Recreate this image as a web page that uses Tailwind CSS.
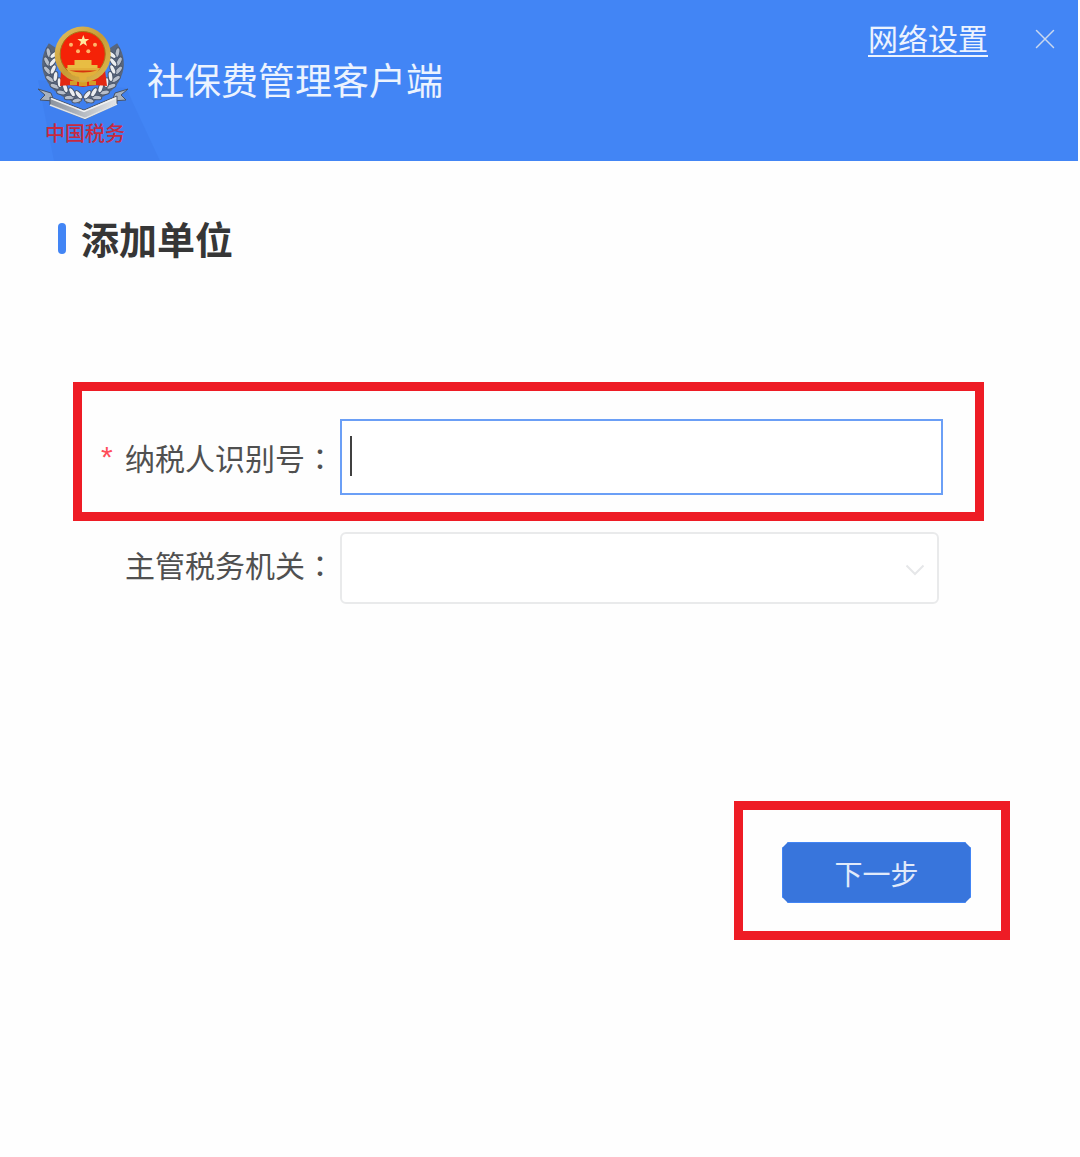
<!DOCTYPE html>
<html lang="zh-CN">
<head>
<meta charset="utf-8">
<meta name="viewport" content="width=device-width, initial-scale=1">
<title>社保费管理客户端</title>
<script src="https://cdn.jsdelivr.net/npm/@tailwindcss/browser@4"></script>
</head>
<body class="min-h-screen bg-[#fefefe] font-['Noto_Sans_CJK_SC',sans-serif] text-[#505050]">
<header class="mr-[2px] flex h-[161px] items-start bg-[#4285f5]">
  <svg class="h-[161px] w-[147px] shrink-0 overflow-visible" viewBox="0 0 147 161" role="img" aria-label="中国税务">
    <defs>
      <linearGradient id="gold" x1="0" y1="0" x2="1" y2="1">
        <stop offset="0" stop-color="#e3c464"/><stop offset=".5" stop-color="#c79a35"/><stop offset="1" stop-color="#e0bd52"/>
      </linearGradient>
      <linearGradient id="silver" x1="0" y1="0" x2="1" y2="0">
        <stop offset="0" stop-color="#8a929d"/><stop offset="1" stop-color="#e3e5e8"/>
      </linearGradient>
      <g id="grain" stroke="#4a566b" stroke-width="1">
        <ellipse cx="-3.500" cy="0" rx="2.300" ry="5" transform="rotate(-32)" fill="#b7bec9"/>
        <ellipse cx="3.500" cy="0" rx="2.300" ry="5" transform="rotate(32)" fill="#eceef1"/>
      </g>
      <g id="branch">
        <path d="M53 46C41 64 47 89 81 99" fill="none" stroke="#58667d" stroke-width="10"/>
        <use href="#grain" transform="translate(76 97) rotate(-72)"/>
        <use href="#grain" transform="translate(69 94) rotate(-62)"/>
        <use href="#grain" transform="translate(62 89) rotate(-50)"/>
        <use href="#grain" transform="translate(56 83) rotate(-38)"/>
        <use href="#grain" transform="translate(52 76) rotate(-24)"/>
        <use href="#grain" transform="translate(50 68) rotate(-8)"/>
        <use href="#grain" transform="translate(50 60) rotate(6)"/>
        <use href="#grain" transform="translate(52 52) rotate(20)"/>
      </g>
    </defs>
    <path d="M38 80 L54 161 L160 161 L126 88Z" fill="#3f80f0"/>
    <!-- wreath -->
    <use href="#branch"/>
    <use href="#branch" transform="translate(166 0) scale(-1 1)"/>
    <!-- drapery -->
    <path d="M61 70 L105 70 L107 86 Q95 84 83 87 Q71 84 60 86Z" fill="#e22812"/>
    <path d="M70 81h7v4h-7zM79 81h8v5h-8zM89 81h7v4h-7z" fill="#d79c25"/>
    <circle cx="82.700" cy="54.500" r="28" fill="url(#gold)"/>
    <circle cx="82.700" cy="54" r="22.500" fill="#f52207" stroke="#a57519" stroke-width="1"/>
    <path d="M83.300 35l1.500 4.100h4.400l-3.500 2.700 1.300 4.200-3.700-2.500-3.700 2.500 1.300-4.200-3.500-2.700h4.400z" fill="#ffe9a0"/>
    <g fill="#ffb56a">
      <circle cx="71" cy="44.700" r="2"/><circle cx="95" cy="44.700" r="2"/><circle cx="78" cy="51.300" r="2"/><circle cx="88.300" cy="51.300" r="2"/>
    </g>
    <path d="M74.500 60h17v5h6v3h-30v-3h7z" fill="#e8bd43"/>
    <path d="M66 68h34q-4 9-17 9.500Q70 77 66 68z" fill="#e3b03a"/>
    <path d="M69 70.500h28q-14 4-28 0z" fill="#d6340d"/>
    <path d="M79 77.500q4-3 8 0l-1 3h-6z" fill="#e3b03a"/>
    <!-- ribbon -->
    <path d="M38 89l13 4 3 8-14-1 5-5zM128 89l-13 4-3 8 14-1-5-5z" fill="#a9b2be" stroke="#465267" stroke-width="1"/>
    <path d="M50 97 L84 110 L117 96 L117 104 L85 119 L50 105Z" fill="url(#silver)" stroke="#4a5568" stroke-width="1"/>
    <path d="M51 98.500 L84 111.500 L116 98" fill="none" stroke="#f1f2f4" stroke-width="1.500"/>
    <path d="M50 105 L85 118.500 L117 104" fill="none" stroke="#e1e4e8" stroke-width="1.500"/>
    <text x="45" y="141" font-size="20" font-weight="500" fill="#c62a40" font-family="'Noto Sans CJK SC', sans-serif">中国税务</text>
  </svg>
  <h1 class="pt-[51px] text-[37px] leading-[56px] font-normal text-white/90">社保费管理客户端</h1>
  <nav class="ml-auto flex items-center gap-[44px] pt-[20px] pr-[20px]">
    <a href="#" class="border-b-2 border-white/90 text-[30px] leading-[35px] font-normal text-white/90">网络设置</a>
    <button type="button" aria-label="关闭" class="flex size-[26px] items-center justify-center">
      <svg class="size-[20px]" viewBox="0 0 20 20" fill="none" stroke="#c9d8ef" stroke-width="1.500" stroke-linecap="round"><path d="M1.500 1.500l17 17M18.500 1.500l-17 17"/></svg>
    </button>
  </nav>
</header>

<main class="pt-[49px]">
  <div class="flex items-center gap-[15px] pl-[58px]">
    <span class="h-[31px] w-[8px] rounded-full bg-[#4285f5]"></span>
    <h2 class="text-[38px] leading-[56px] font-bold text-[#363636]">添加单位</h2>
  </div>

  <form class="pt-[116px]">
    <div class="mr-[96px] ml-[73px] flex items-center border-[9px] border-[#ee1c25] pt-[28px] pr-[32px] pb-[17px] pl-[19px]">
      <label for="taxpayer" class="flex w-[239px] shrink-0 items-center text-[30px] leading-[44px]"><span class="w-[24px] font-['Liberation_Sans'] text-[#ff4d5a]">*</span>纳税人识别号<span class="font-['Noto_Sans_CJK_TC']" lang="zh-TW">：</span></label>
      <div class="relative flex-1">
        <input id="taxpayer" type="text" required class="block h-[76px] w-full border-2 border-[#6b9ff6] bg-white px-2 text-[30px] outline-none">
        <span class="absolute top-[17px] left-[10px] h-[40px] w-[2px] bg-[#404040]"></span>
      </div>
    </div>
    <div class="mr-[141px] ml-[101px] flex items-start pt-[11px]">
      <label for="authority" class="flex w-[239px] shrink-0 items-center pt-[10px] pl-[24px] text-[30px] leading-[44px]">主管税务机关<span class="font-['Noto_Sans_CJK_TC']" lang="zh-TW">：</span></label>
      <div class="relative flex-1">
        <select id="authority" class="block h-[72px] w-full appearance-none rounded-md border-2 border-[#e9eaeb] bg-white px-2 text-[30px]"><option value=""></option></select>
        <svg class="pointer-events-none absolute top-[32px] right-[14px] h-[12px] w-[20px]" viewBox="0 0 20 12" fill="none" stroke="#e6e7e9" stroke-width="2"><path d="M1.500 1.500L10 10l8.500-8.500"/></svg>
      </div>
    </div>
    <div class="flex justify-end pt-[197px] pr-[70px]">
      <div class="border-[9px] border-[#ee1c25] pt-[32px] pr-[30px] pb-[28px] pl-[39px]">
        <button type="submit" class="block h-[61px] w-[189px] border border-[#4285f5] bg-[#3875dc] text-[28px] leading-[56px] text-white/85 [clip-path:polygon(6px_0,calc(100%-6px)_0,100%_6px,100%_calc(100%-6px),calc(100%-6px)_100%,6px_100%,0_calc(100%-6px),0_6px)]">下一步</button>
      </div>
    </div>
  </form>
</main>
</body>
</html>
